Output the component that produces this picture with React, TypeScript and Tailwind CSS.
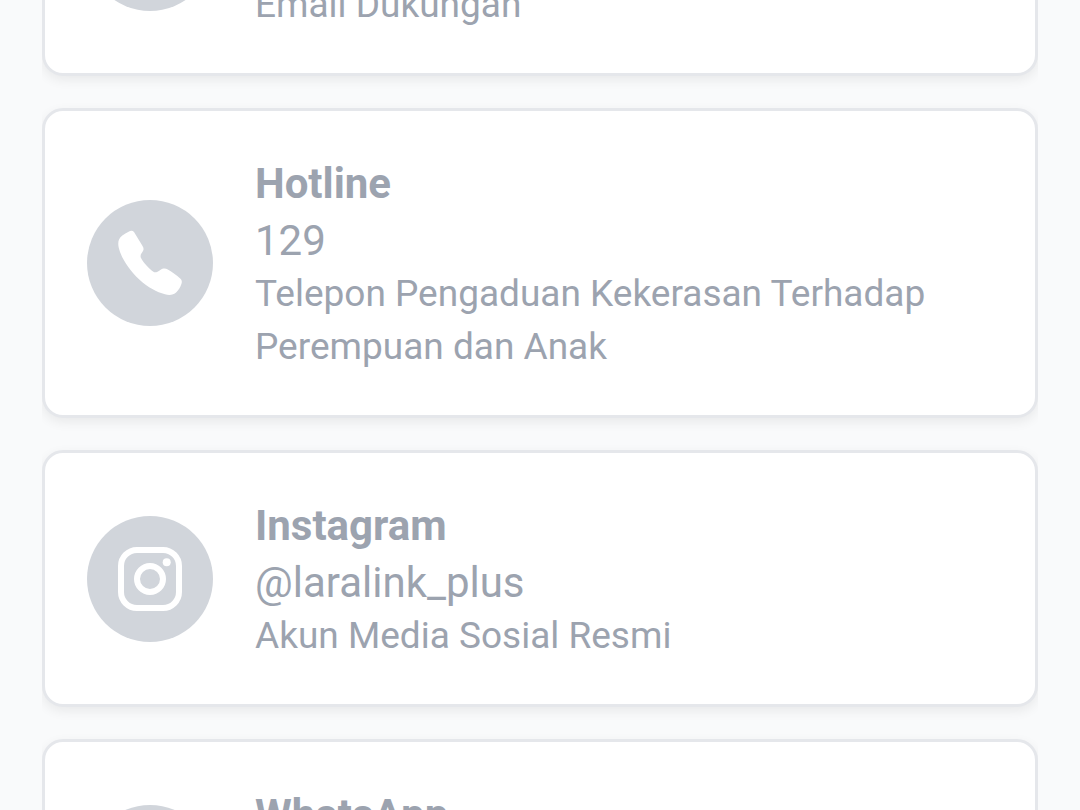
import type { ComponentType, SVGProps } from "react";
import { IoLogoWhatsapp, IoMail } from "react-icons/io5";

interface Contact {
  icon: ComponentType<SVGProps<SVGSVGElement>>;
  title: string;
  value?: string;
  description?: string;
}

function PhoneIcon(props: SVGProps<SVGSVGElement>) {
  return (
    <svg viewBox="0 0 72 72" fill="currentColor" {...props}>
      <path d="M14.6 4.7C16.8 3.4 18.7 3.5 20 5.1L28.4 18.8C29.9 21.3 29.9 22.8 28.7 24.6C27.1 26.8 25.9 28.4 27 31.1C28.6 34.8 36 42.7 39.4 44.8C41.4 46 43.5 44.9 46.3 43C49.2 41 51.4 41.1 53.8 42.5C58.2 45.2 62.6 48.2 66.2 51.4C68 53 68.2 54.7 67.3 57.2C66.3 60.2 64.7 63 62.6 64.9C59 68.2 55.5 68.5 51 67.3C42.6 64.9 34.3 60.8 25.3 52.5C14.5 42.5 7.2 30.5 4.8 21C3.6 15.9 4.2 11.7 8.3 8.6C10.3 7 12.4 6 14.6 4.7Z" />
    </svg>
  );
}

function InstagramIcon(props: SVGProps<SVGSVGElement>) {
  return (
    <svg viewBox="0 0 72 72" fill="none" stroke="currentColor" strokeWidth="6" {...props}>
      <rect x="7" y="7" width="58" height="58" rx="16" />
      <circle cx="36" cy="36" r="13" />
      <circle cx="52.7" cy="19.2" r="4" fill="currentColor" stroke="none" />
    </svg>
  );
}

const contacts: Contact[] = [
  { icon: IoMail, title: "Email", description: "Email Dukungan" },
  {
    icon: PhoneIcon,
    title: "Hotline",
    value: "129",
    description: "Telepon Pengaduan Kekerasan Terhadap Perempuan dan Anak",
  },
  {
    icon: InstagramIcon,
    title: "Instagram",
    value: "@laralink_plus",
    description: "Akun Media Sosial Resmi",
  },
  { icon: IoLogoWhatsapp, title: "WhatsApp" },
];

function ContactCard({ icon: Icon, title, value, description }: Contact) {
  return (
    <li className="overflow-x-clip pb-8">
      <article className="flex items-center gap-[42px] rounded-[21px] border-3 border-[#e5e7eb] bg-white p-[42px] shadow-[0_4px_12px_rgba(0,0,0,0.07)]">
        <div className="flex size-[126px] shrink-0 items-center justify-center rounded-full bg-[#d1d5db]">
          <Icon className="size-[72px] text-white" aria-hidden="true" />
        </div>
        <div className="min-w-0 flex-1 text-[#9ca3af]">
          <h2 className="py-1 text-[42px] leading-[54px] font-bold">{title}</h2>
          <p className="min-h-[52px] text-[42px] leading-[52px]">{value}</p>
          <p className="min-h-[53px] text-[37px] leading-[53px]">{description}</p>
        </div>
      </article>
    </li>
  );
}

export default function App() {
  return (
    <main className="h-screen overflow-hidden bg-[#f9fafb] px-[42px] font-['Roboto',sans-serif]">
      <ul className="-mt-[181px]">
        {contacts.map((contact) => (
          <ContactCard key={contact.title} {...contact} />
        ))}
      </ul>
    </main>
  );
}
